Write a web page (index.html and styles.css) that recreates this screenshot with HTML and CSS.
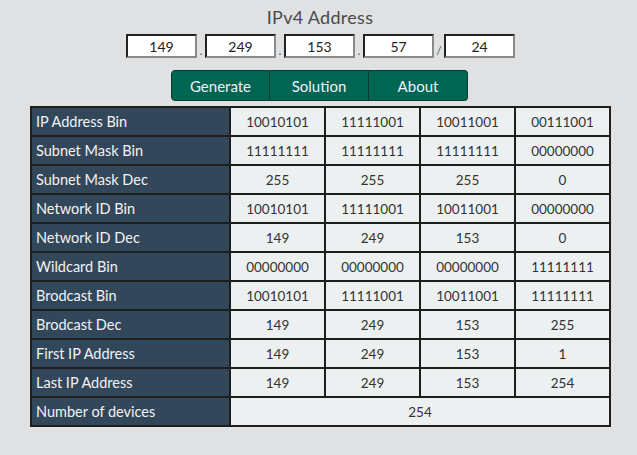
FILE: index.html
```html
<!DOCTYPE html>
<html>
<head>
<meta charset="utf-8">
<link rel="stylesheet" href="styles.css">
</head>
<body>
<div class="page">
  <h1 class="title">IPv4 Address</h1>
  <div class="ip-row">
    <input class="oct" value="149"><span class="sep">.</span>
    <input class="oct" value="249"><span class="sep">.</span>
    <input class="oct" value="153"><span class="sep">.</span>
    <input class="oct" value="57"><span class="sep slash">/</span>
    <input class="oct" value="24">
  </div>
  <div class="btns">
    <button class="btn">Generate</button><button class="btn">Solution</button><button class="btn">About</button>
  </div>
  <table class="grid">
    <tr><th>IP Address Bin</th><td>10010101</td><td>11111001</td><td>10011001</td><td>00111001</td></tr>
    <tr><th>Subnet Mask Bin</th><td>11111111</td><td>11111111</td><td>11111111</td><td>00000000</td></tr>
    <tr><th>Subnet Mask Dec</th><td>255</td><td>255</td><td>255</td><td>0</td></tr>
    <tr><th>Network ID Bin</th><td>10010101</td><td>11111001</td><td>10011001</td><td>00000000</td></tr>
    <tr><th>Network ID Dec</th><td>149</td><td>249</td><td>153</td><td>0</td></tr>
    <tr><th>Wildcard Bin</th><td>00000000</td><td>00000000</td><td>00000000</td><td>11111111</td></tr>
    <tr><th>Brodcast Bin</th><td>10010101</td><td>11111001</td><td>10011001</td><td>11111111</td></tr>
    <tr><th>Brodcast Dec</th><td>149</td><td>249</td><td>153</td><td>255</td></tr>
    <tr><th>First IP Address</th><td>149</td><td>249</td><td>153</td><td>1</td></tr>
    <tr><th>Last IP Address</th><td>149</td><td>249</td><td>153</td><td>254</td></tr>
    <tr><th>Number of devices</th><td colspan="4">254</td></tr>
  </table>
</div>
</body>
</html>
```
FILE: styles.css
```css
html, body {
  margin: 0;
  background: #e0e1e2;
  font-family: "Lato", "Open Sans", sans-serif;
}
.page {
  width: 580px;
  margin: 0 0 0 30px;
  padding-top: 7px;
}
.title {
  margin: 0;
  text-align: center;
  font-weight: normal;
  font-size: 18px;
  line-height: 20px;
  color: #4a4a4a;
  letter-spacing: 0.3px;
}
.ip-row {
  display: flex;
  justify-content: center;
  align-items: flex-end;
  margin-top: 7px;
  padding-left: 1px;
}
.oct {
  box-sizing: border-box;
  width: 71px;
  height: 24px;
  border: 2px solid #222;
  border-right-color: #8a8a8a;
  border-bottom-color: #8a8a8a;
  background: #fff;
  text-align: center;
  font-family: "Lato", sans-serif;
  font-size: 14px;
  color: #222;
  padding: 0;
}
.sep {
  width: 8px;
  text-align: center;
  font-size: 12px;
  color: #555;
  line-height: 14px;
}
.slash { width: 10px; }
.btns {
  display: flex;
  justify-content: center;
  margin-top: 12px;
  padding-right: 1px;
}
.btn {
  width: 99px;
  height: 31px;
  background: #006652;
  color: #eef;
  border: 1px solid #0d3a30;
  border-left: none;
  font-family: "Lato", sans-serif;
  font-size: 15px;
  padding: 0;
}
.btn:first-child {
  border-left: 1px solid #0d3a30;
  border-radius: 4px 0 0 4px;
}
.btn:last-child { border-radius: 0 4px 4px 0; }
.grid {
  margin-top: 5px;
  width: 581px;
  border-collapse: collapse;
  table-layout: fixed;
}
.grid th, .grid td {
  border: 2px solid #1e1e1e;
  height: 27px;
  padding: 0;
  font-size: 14px;
}
.grid th {
  width: 193px;
  background: #33475b;
  color: #f2f2f2;
  text-align: left;
  font-weight: normal;
  padding-left: 4px;
  font-size: 14.5px;
}
.grid td {
  background: #edf0f1;
  text-align: center;
  color: #333;
  font-size: 13.5px;
}
```
